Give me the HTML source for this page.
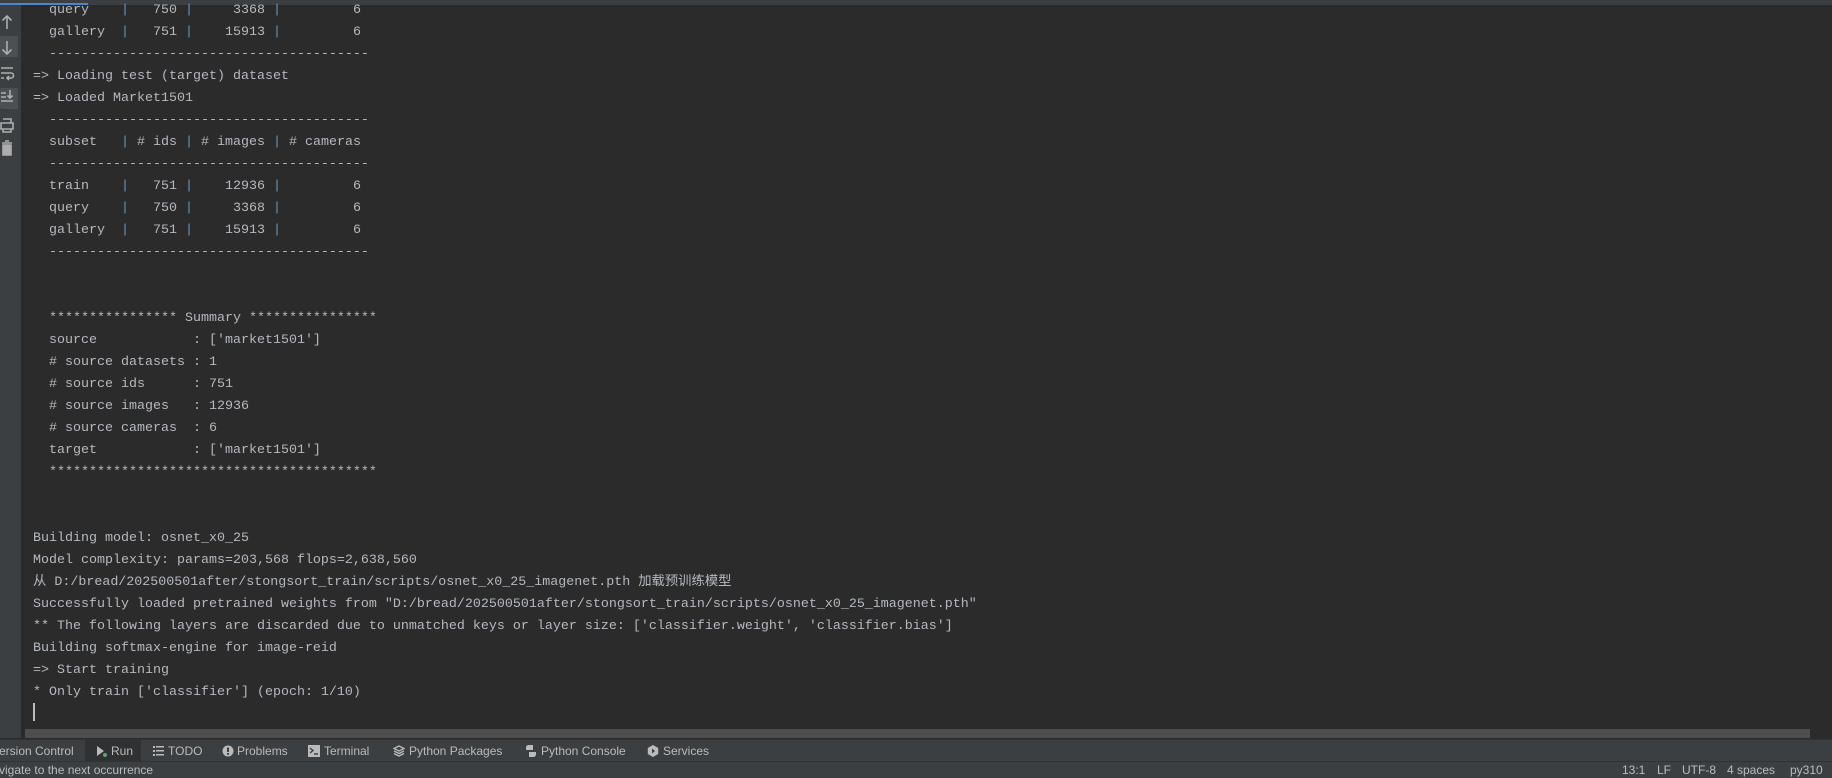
<!DOCTYPE html>
<html><head><meta charset="utf-8"><style>
body{margin:0;width:1832px;height:778px;background:#2b2b2b;overflow:hidden;position:relative;font-family:"Liberation Sans","Noto Sans CJK SC",sans-serif}
#top{position:absolute;left:0;top:0;width:1832px;height:5px;background:#3c3f41}
#top i{position:absolute;left:0;top:3px;width:88px;height:2px;background:#4a88c7}
#left{position:absolute;left:0;top:5px;width:21px;height:733px;background:#3c3f41}
#left .hl{position:absolute;left:0;width:18px;height:21px;background:#4c5052;border-radius:2px}
#code{position:absolute;left:33px;top:0px;font-family:"Liberation Mono","Noto Sans CJK SC",monospace;font-size:13.33px;line-height:22px;color:#b5b9bf;white-space:pre}
.p{color:#6897bb}
#cursor{position:absolute;left:33px;top:703px;width:2px;height:18px;background:#bbbbbb}
#hs{position:absolute;left:25px;top:729px;width:1785px;height:9px;background:#4e4e4e}
#tb{position:absolute;left:0;top:739px;width:1832px;height:22px;background:#3c3f41;border-top:1px solid #323232;box-sizing:border-box;font-size:12px;color:#bbbbbb}
#tb span{position:absolute;top:4px}
#run{position:absolute;left:85px;top:0;width:56px;height:22px;background:#2f3133}
#st{position:absolute;left:0;top:761px;width:1832px;height:17px;background:#3c3f41;border-top:1px solid #323232;box-sizing:border-box;font-size:12px;color:#bbbbbb}
#st span{position:absolute;top:1px}
</style></head><body>
<div id="top"><i></i></div>
<div id="left">
<div class="hl" style="top:31px"></div>
<div class="hl" style="top:83px"></div>
<svg width="21" height="170" style="position:absolute;left:0;top:0" fill="none" stroke="#adadad" stroke-width="1.6">
<path d="M7 24V11M2.5 15.5L7 11l4.5 4.5"/>
<path d="M7 36v13M2.5 44.5L7 49l4.5-4.5"/>
<path d="M1 63h12M1 68h10a2.5 2.5 0 0 1 0 5H7M9 71l-2 2 2 2M1 73h3"/>
<path d="M1 88h5M1 92h5M1 96h12M10 85v8M7.5 90.5L10 93l2.5-2.5"/>
<path d="M3 114h8v4M1 118h12v6H1zM3 124h8v3H3z"/>
<path d="M2 138h10M5 136h4M3 140h8v10H3z" fill="#adadad"/>
</svg>
</div>
<div id="code">  query    <span class="p">|</span>   750 <span class="p">|</span>     3368 <span class="p">|</span>         6
  gallery  <span class="p">|</span>   751 <span class="p">|</span>    15913 <span class="p">|</span>         6
  ----------------------------------------
=> Loading test (target) dataset
=> Loaded Market1501
  ----------------------------------------
  subset   <span class="p">|</span> # ids <span class="p">|</span> # images <span class="p">|</span> # cameras
  ----------------------------------------
  train    <span class="p">|</span>   751 <span class="p">|</span>    12936 <span class="p">|</span>         6
  query    <span class="p">|</span>   750 <span class="p">|</span>     3368 <span class="p">|</span>         6
  gallery  <span class="p">|</span>   751 <span class="p">|</span>    15913 <span class="p">|</span>         6
  ----------------------------------------


  **************** Summary ****************
  source            : ['market1501']
  # source datasets : 1
  # source ids      : 751
  # source images   : 12936
  # source cameras  : 6
  target            : ['market1501']
  *****************************************


Building model: osnet_x0_25
Model complexity: params=203,568 flops=2,638,560
从 D:/bread/202500501after/stongsort_train/scripts/osnet_x0_25_imagenet.pth 加载预训练模型
Successfully loaded pretrained weights from "D:/bread/202500501after/stongsort_train/scripts/osnet_x0_25_imagenet.pth"
** The following layers are discarded due to unmatched keys or layer size: ['classifier.weight', 'classifier.bias']
Building softmax-engine for image-reid
=> Start training
* Only train ['classifier'] (epoch: 1/10)</div>
<div id="cursor"></div>
<div id="hs"></div>
<div id="tb">
<div id="run"></div>
<span style="left:-1px">ersion Control</span>
<svg width="12" height="12" style="position:absolute;left:96px;top:5px"><path d="M1 1l7 5-7 5z" fill="#bbbbbb"/><circle cx="9" cy="10" r="2" fill="#59a869"/></svg>
<span style="left:111px">Run</span>
<svg width="12" height="12" style="position:absolute;left:153px;top:5px" fill="#bbbbbb"><rect x="0" y="1" width="2" height="2"/><rect x="0" y="5" width="2" height="2"/><rect x="0" y="9" width="2" height="2"/><rect x="3" y="1" width="8" height="1.5"/><rect x="3" y="5" width="8" height="1.5"/><rect x="3" y="9" width="8" height="1.5"/></svg>
<span style="left:168px">TODO</span>
<svg width="12" height="12" style="position:absolute;left:222px;top:5px"><circle cx="6" cy="6" r="5.5" fill="#bbbbbb"/><rect x="5" y="2.5" width="2" height="4.5" fill="#3c3f41"/><rect x="5" y="8" width="2" height="1.8" fill="#3c3f41"/></svg>
<span style="left:237px">Problems</span>
<svg width="12" height="12" style="position:absolute;left:308px;top:5px"><rect x="0" y="0" width="12" height="12" fill="#bbbbbb"/><path d="M2 3l3 2.5L2 8M6 9h4" stroke="#3c3f41" stroke-width="1.4" fill="none"/></svg>
<span style="left:324px">Terminal</span>
<svg width="12" height="12" style="position:absolute;left:393px;top:5px" fill="none" stroke="#bbbbbb" stroke-width="1.3"><path d="M6 1l5 2.5-5 2.5-5-2.5zM1 6l5 2.5L11 6M1 8.5l5 2.5 5-2.5"/></svg>
<span style="left:409px">Python Packages</span>
<svg width="12" height="12" style="position:absolute;left:525px;top:5px" fill="#bbbbbb"><path d="M3 0h5v5H1V3a3 3 0 0 1 2-3zM9 7h2v2a3 3 0 0 1-2 3H4V7z"/></svg>
<span style="left:541px">Python Console</span>
<svg width="12" height="12" style="position:absolute;left:647px;top:5px"><path d="M6 0l5.2 3v6L6 12 .8 9V3z" fill="#bbbbbb"/><path d="M5 3.5l3 2.5-3 2.5z" fill="#3c3f41"/></svg>
<span style="left:663px">Services</span>
</div>
<div id="st">
<span style="left:-1px">vigate to the next occurrence</span>
<span style="left:1622px">13:1</span>
<span style="left:1657px">LF</span>
<span style="left:1682px">UTF-8</span>
<span style="left:1727px">4 spaces</span>
<span style="left:1790px">py310</span>
</div>
</body></html>
